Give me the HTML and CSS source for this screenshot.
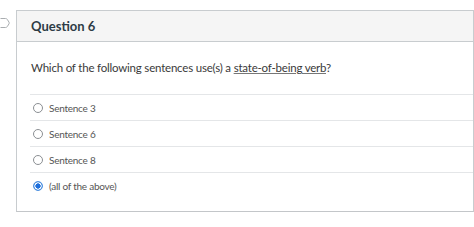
FILE: index.html
```html
<!DOCTYPE html>
<html lang="en">
<head>
<meta charset="UTF-8" />
<title>Question 6</title>
<link rel="stylesheet" href="styles.css">
</head>
<body>
<div class="page">
  <div class="flag" aria-hidden="true">
    <svg width="10" height="12" viewBox="0 0 10 12">
      <path d="M0.5 1.5 H5.5 Q6.5 1.5 7.3 2.4 L9 5.2 Q9.5 6 9 6.8 L7.3 9.6 Q6.5 10.5 5.5 10.5 H0.5" fill="#fff" stroke="#a9adb0" stroke-width="1"/>
    </svg>
  </div>
  <div class="question">
    <div class="question-header">Question 6</div>
    <div class="question-body">
      <p class="question-text">Which of the following sentences use(s) a <u>state-of-being verb</u>?</p>
      <ul class="answers">
        <li class="answer"><span class="radio"></span>Sentence 3</li>
        <li class="answer"><span class="radio"></span>Sentence 6</li>
        <li class="answer"><span class="radio"></span>Sentence 8</li>
        <li class="answer"><span class="radio checked"></span>(all of the above)</li>
      </ul>
    </div>
  </div>
</div>
</body>
</html>
```

FILE: styles.css
```css
*, *::before, *::after {
  box-sizing: border-box;
}
body {
  margin: 0;
  font-family: Lato, 'Open Sans', sans-serif;
  background: #fff;
  color: #333;
}
.page {
  display: flex;
  align-items: flex-start;
  padding-top: 10px;
}
.flag {
  width: 16px;
  padding-top: 7px;
  flex-shrink: 0;
}
.flag svg {
  display: block;
}
.question {
  width: 458px;
  border: 1px solid #c8cccf;
  border-bottom-color: #c3c6c9;
}
.question-header {
  height: 31px;
  background: #f5f5f5;
  border-bottom: 1px solid #c8cccf;
  padding: 0 14px;
  display: flex;
  align-items: center;
  font-size: 13px;
  font-weight: 700;
  color: #2d3b45;
}
.question-body {
  padding: 18px 0 13px 13px;
}
.question-text {
  margin: 0 0 18px 1px;
  font-size: 11.5px;
  letter-spacing: -0.2px;
  line-height: 16px;
  color: #3a3a3a;
}
.question-text u {
  text-decoration-color: #777;
  text-underline-offset: 1px;
}
.answers {
  list-style: none;
  margin: 0;
  padding: 0;
}
.answer {
  height: 26px;
  border-top: 1px solid #e4e6e8;
  display: flex;
  align-items: center;
  font-size: 10px;
  letter-spacing: -0.25px;
  color: #555;
  padding-left: 3px;
}
.radio {
  width: 10px;
  height: 10px;
  border: 1px solid #8b8f93;
  border-radius: 50%;
  margin-right: 6px;
  background: #fff;
}
.radio.checked {
  border-color: #4a8fe0;
  background: radial-gradient(circle, #1d6fdc 0 2.4px, #fff 2.9px 3.4px, #5b9be6 3.9px);
}
```
